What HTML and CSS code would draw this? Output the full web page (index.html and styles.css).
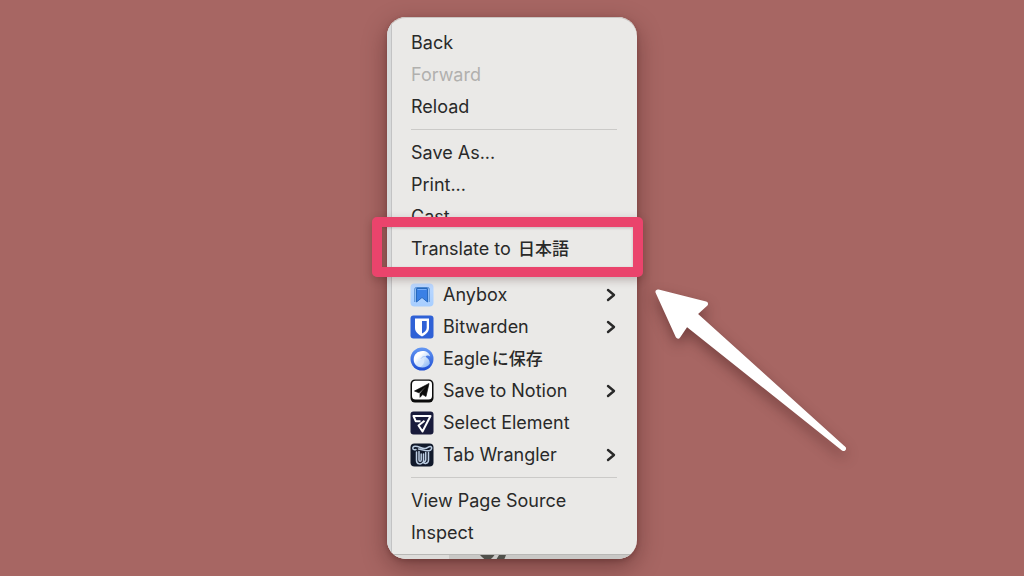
FILE: index.html
```html
<!DOCTYPE html>
<html lang="en">
<head>
<meta charset="utf-8">
<title>Context menu</title>
<link rel="stylesheet" href="styles.css">
</head>
<body>
<main class="stage">
  <nav class="menu" aria-label="Page context menu">
    <div class="backdrop" aria-hidden="true">
      <div class="backdrop-page">
        <svg class="backdrop-mark" width="28" height="5" viewBox="0 0 28 5"><path d="M0 0h14.500Q12 4 9 5H6Q3 3.500 0 0z M19 0h7l-2 5h-8z" fill="#50504b"/></svg>
      </div>
    </div>
    <div class="group">
      <button class="item" type="button">Back</button>
      <button class="item" type="button" disabled>Forward</button>
      <button class="item" type="button">Reload</button>
    </div>
    <hr class="separator">
    <div class="group">
      <button class="item" type="button">Save As...</button>
      <button class="item" type="button">Print...</button>
      <button class="item" type="button">Cast...</button>
      <button class="item" type="button"><span class="label">Translate to <span class="cjk" lang="ja">日本語</span></span><span class="highlight"></span></button>
    </div>
    <hr class="separator">
    <div class="group">
      <button class="item" type="button">
        <svg class="icon" viewBox="0 0 24 24"><defs><linearGradient id="sky" x1="0" y1="0" x2="0" y2="1"><stop stop-color="#bcd8ff"/><stop offset="1" stop-color="#a7ceff"/></linearGradient></defs><rect x=".5" y=".5" width="23" height="23" rx="4" fill="url(#sky)"/><path d="M6.500 5.500h11V19L12 14.500 6.500 19z" fill="#3a80e5" stroke="#2869bd"/><path d="M4.800 19V6Q4.800 4.500 6.300 4.500H17.700Q19.200 4.500 19.200 6V19" fill="none" stroke="#4b87d0" stroke-width="1"/><path d="M7.500 6.500h9" stroke="#77aefa"/></svg>
        <span class="label">Anybox</span>
        <svg class="chevron" viewBox="0 0 10 14"><path d="M2 2l6 5-6 5"/></svg>
      </button>
      <button class="item" type="button">
        <svg class="icon" viewBox="0 0 24 24"><rect x=".5" y=".5" width="23" height="23" rx="3" fill="#2f61d6"/><path d="M5 3.500h14v9.500c0 4-3.500 6.500-7 8.500-3.500-2-7-4.500-7-8.500z" fill="#fff"/><path d="M12 6h4.700v7c0 2.500-2.400 4.200-4.700 5.500z" fill="#2f61d6"/></svg>
        <span class="label">Bitwarden</span>
        <svg class="chevron" viewBox="0 0 10 14"><path d="M2 2l6 5-6 5"/></svg>
      </button>
      <button class="item" type="button">
        <svg class="icon" viewBox="0 0 24 24"><defs><linearGradient id="orb" x1="0" y1="0" x2="0" y2="1"><stop stop-color="#6598f3"/><stop offset="1" stop-color="#1e4ed3"/></linearGradient><linearGradient id="wing" x1="0" y1="0" x2="1" y2="1"><stop offset=".3" stop-color="#fff"/><stop offset="1" stop-color="#7fb0f5"/></linearGradient></defs><circle cx="12" cy="12" r="11.500" fill="url(#orb)"/><path d="M12.500 20.500C7 20.500 3.700 17 3.700 12.500 3.700 7.500 7.500 4 12.500 4c4 0 7 2 7.700 5.500-1.700-1.300-3.700-1.200-4.700.2 2.500 1.300 4.500 4 4.300 7-1.800 2.600-4.300 3.800-7.300 3.800z" fill="url(#wing)"/><path d="M10.500 20c-3-1.500-3.500-4.500-1.800-6.500 2.300.8 4-.2 4.800-2.500 1.500 2.500 1 6-3 9z" fill="#d8e8fd"/><path d="M15.500 9.700c-2-.5-3.500.3-4.500 2" fill="none" stroke="#a9c8f7"/></svg>
        <span class="label">Eagle<span class="cjk" lang="ja">に保存</span></span>
      </button>
      <button class="item" type="button">
        <svg class="icon" viewBox="0 0 24 24"><rect x=".5" y=".5" width="23" height="23" rx="4.500" fill="#0b0b0b"/><rect x="2" y="1.800" width="20" height="18.700" rx="3.500" fill="#fff"/><path d="M19 4.500L4.500 12l4.500 1.800L16 7.500l-6 7v3.800l2.700-2.700 3.300 1.900z" fill="#0b0b0b" stroke="#0b0b0b" stroke-width=".7" stroke-linejoin="round"/></svg>
        <span class="label">Save to Notion</span>
        <svg class="chevron" viewBox="0 0 10 14"><path d="M2 2l6 5-6 5"/></svg>
      </button>
      <button class="item" type="button">
        <svg class="icon" viewBox="0 0 24 24"><rect x=".5" y=".5" width="23" height="23" rx="3" fill="#191b3b"/><path d="M10.500 10.200H5.700L3.500 5H20.500L12.500 20.500 8.500 14.500 14.500 9.700" fill="none" stroke="#fff" stroke-width="2" stroke-linejoin="round"/></svg>
        <span class="label">Select Element</span>
      </button>
      <button class="item" type="button">
        <svg class="icon" viewBox="0 0 24 24"><rect x=".5" y=".5" width="23" height="23" rx="4" fill="#11192b"/><g fill="none" stroke="#bccde2" stroke-width="1.500" stroke-linecap="round" stroke-linejoin="round"><path d="M6 6.500C2.500 8 1.500 3.500 5 3.200c4-.3 6.500 2.600 10 2.400 2.500-.1 3.500-2.600 5.500-2.100 2 .6 1.200 4-1.500 4.300-4 .4-7-1.300-10.500-1.800"/><path d="M6.500 9v8.500c0 4 5 4.500 6.500 1.500 1.500 2.500 5.500 1.500 5.500-2V9.500M9 8.500V17c0 1.800 2.200 1.800 2.200 0v-6M13.500 11v6.500c0 1.500 2.200 1.300 2.200-.5V9.500"/></g></svg>
        <span class="label">Tab Wrangler</span>
        <svg class="chevron" viewBox="0 0 10 14"><path d="M2 2l6 5-6 5"/></svg>
      </button>
    </div>
    <hr class="separator">
    <div class="group">
      <button class="item" type="button">View Page Source</button>
      <button class="item" type="button">Inspect</button>
    </div>
    <svg class="arrow" width="194" height="166" viewBox="0 0 194 166" aria-hidden="true"><path d="M4 5L51.500 17 40.500 27 189.500 161.500 32.500 36.500 24 49z"/></svg>
  </nav>
</main>
</body>
</html>
```
FILE: styles.css
```css
* {
  box-sizing: border-box;
}

body {
  margin: 0;
  background: #a76663;
  color: #292929;
  font-family: Inter, "Noto Sans CJK JP", sans-serif;
  font-size: 18px;
  line-height: 24px;
}

.stage {
  display: flex;
  justify-content: center;
  min-height: 100vh;
  padding: 17px 0;
  overflow: hidden;
}

.menu {
  position: relative;
  align-self: flex-start;
  width: 250px;
  padding: 10px 0;
  border-radius: 19px;
  box-shadow: 0 8px 24px rgba(45, 10, 10, 0.38), 0 2px 5px rgba(45, 10, 10, 0.22);
}

.backdrop {
  position: absolute;
  inset: 0;
  overflow: hidden;
  border-radius: 19px;
  background: #eae9e7;
  box-shadow: inset 0 1px #cbc5c2;
}

.backdrop::before {
  content: "";
  position: absolute;
  inset: 0 auto 0 0;
  width: 4px;
  border-right: 1px solid #c3c3c4;
  background: #d8dadb;
}

.backdrop-page {
  position: absolute;
  inset: auto 0 0 4px;
  height: 5px;
  border-top: 1px solid #b9b8b6;
  background: linear-gradient(to right, #dddcda 58px, #c9c8c6 58px);
}

.backdrop-mark {
  position: absolute;
  left: 89px;
  top: 0;
}

.group {
  display: flex;
  flex-direction: column;
}

.item {
  position: relative;
  display: flex;
  align-items: center;
  height: 32px;
  padding: 0 21px 0 24px;
  border: 0;
  background: none;
  color: inherit;
  font: inherit;
  text-align: left;
  white-space: nowrap;
}

.item:disabled {
  color: #b1b0ae;
}

.separator {
  position: relative;
  height: 1px;
  margin: 6px 20px 7px 24px;
  border: 0;
  background: #cbcac8;
}

.icon {
  flex: none;
  width: 24px;
  height: 24px;
  margin: 0 9px 0 -1px;
}

.label {
  flex: 1;
}

.cjk {
  margin-left: 2px;
  font-size: 17px;
  font-weight: 500;
}

.chevron {
  width: 10px;
  height: 14px;
  fill: none;
  stroke: #292929;
  stroke-width: 2.4;
  stroke-linecap: round;
  stroke-linejoin: round;
}

.highlight {
  position: absolute;
  z-index: 1;
  inset: -16px -6px -12px -15px;
  border: 10px solid #ea446c;
  border-radius: 5px;
  box-shadow: 0 3px 8px rgba(50, 10, 10, 0.25), inset 0 1px 3px rgba(50, 10, 10, 0.2);
}

.arrow {
  position: absolute;
  left: 267px;
  top: 270px;
  overflow: visible;
  fill: #fff;
  stroke: #fff;
  stroke-width: 5;
  stroke-linejoin: round;
  filter: drop-shadow(0 6px 7px rgba(45, 10, 10, 0.4));
}
```
